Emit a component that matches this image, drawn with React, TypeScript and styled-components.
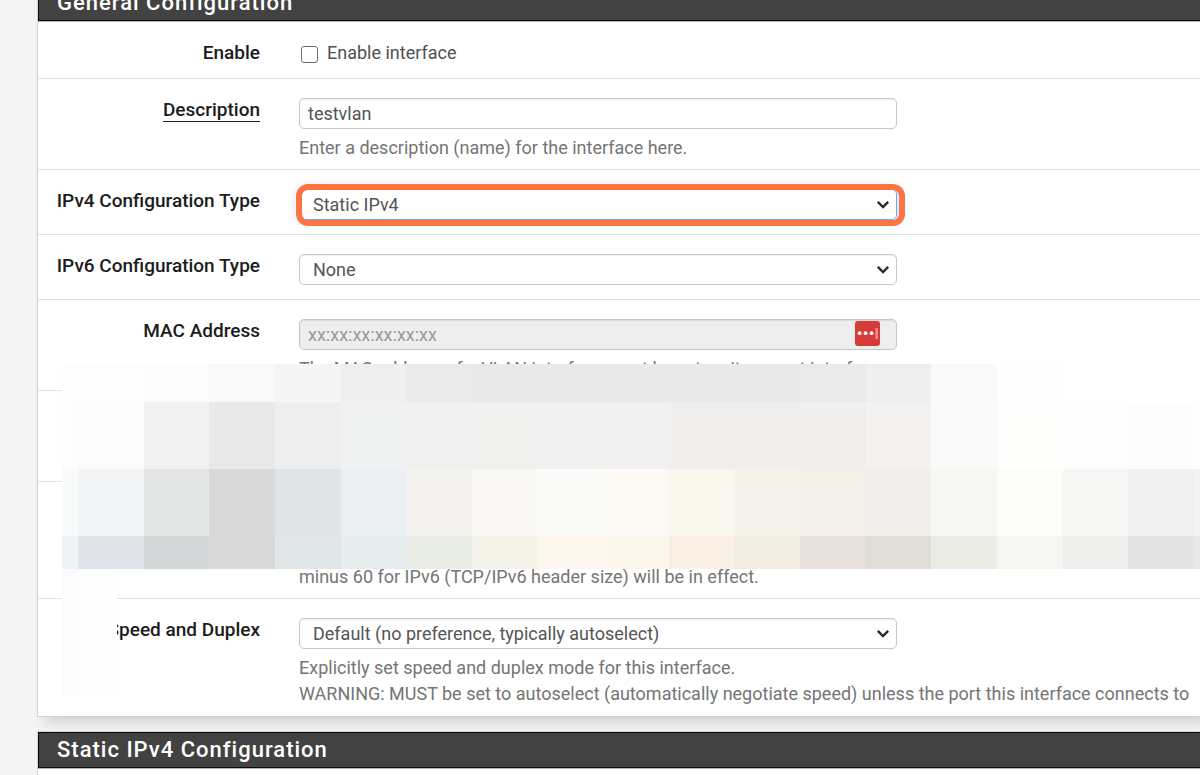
import React from "react";
import styled, { createGlobalStyle, css } from "styled-components";

const GlobalStyle = createGlobalStyle`
  *, *::before, *::after { box-sizing: border-box; }
  body {
    margin: 0;
    background: #f4f4f4;
    color: #212121;
    font-family: Roboto, "Liberation Sans", sans-serif;
    font-size: 18px;
    line-height: 26px;
    overflow: hidden;
  }
`;

const Page = styled.main`
  display: flex;
  flex-direction: column;
  gap: 14px;
  min-height: calc(100vh + 24px);
  margin-top: -16px;
  padding-left: 37px;
`;

const Panel = styled.section<{ $grow?: boolean }>`
  position: relative;
  flex: ${(p) => (p.$grow ? "1 0 auto" : "none")};
  overflow: hidden;
  background: #fff;
  border: 1px solid #d2d2d2;
  border-right: 0;
`;

const PanelFrame = styled.div`
  box-shadow: 8px 6px 12px rgba(0, 0, 0, 0.14);
`;

const Heading = styled.h2`
  height: 36px;
  margin: 0;
  padding: 0 18px;
  border: 1px solid #0c0c0c;
  border-right: 0;
  background: #424242;
  box-shadow: 0 1px 0 #b4b4b4;
  color: #fff;
  font-size: 22px;
  font-weight: 500;
  line-height: 34px;
  letter-spacing: 1px;
`;

const Rows = styled.div`
  padding-top: 1px;
`;

const Row = styled.div`
  display: grid;
  grid-template-columns: 222px minmax(0, 1fr);
  column-gap: 39px;
  padding: 19px 0 8px;
  border-bottom: 1px solid #e0e0e0;

  &:last-child { border-bottom: 0; }
`;

const labelText = css`
  justify-self: end;
  align-self: start;
  color: #1c1c1c;
  font-size: 19px;
  font-weight: 500;
  line-height: 24px;
  white-space: nowrap;
`;

const Label = styled.label`
  ${labelText}
`;

const Caption = styled.span`
  ${labelText}
`;

const Underlined = styled.span`
  display: block;
  height: 24px;
  border-bottom: 1px solid #212121;
`;

const CheckLabel = styled.label`
  display: flex;
  align-items: center;
  gap: 9px;
  margin-bottom: 5px;
  padding-left: 2px;
  color: #505050;
  line-height: 24px;
`;

const Checkbox = styled.input`
  appearance: none;
  width: 17px;
  height: 17px;
  margin: 2px 0 0;
  border: 1px solid #6e6e6e;
  border-radius: 3px;
  background: #fff;
`;

const Control = styled.div`
  position: relative;
  display: flex;
  max-width: 598px;
  height: 31px;
  margin-bottom: 6px;
`;

const controlBox = css`
  width: 100%;
  height: 31px;
  border: 1px solid #c8c8c8;
  border-radius: 5px;
  outline: 0;
  background: #fff;
  box-shadow: inset 0 1px 1px rgba(0, 0, 0, 0.08);
  color: #555;
  font: inherit;
`;

const TextBox = styled.input`
  ${controlBox}
  padding: 0 8px;

  &:disabled { background: #eee; border-color: #c6c6c6; }
  &::placeholder { color: #999; opacity: 1; }
`;

const Select = styled.select<{ $active?: boolean }>`
  ${controlBox}
  appearance: none;
  padding: 0 36px 0 13px;
  ${(p) =>
    p.$active &&
    css`
      border-color: #66afe9;
      box-shadow: 0 0 11px rgba(102, 175, 233, 0.6);
    `}
`;

const Arrow = styled.svg`
  position: absolute;
  top: 11px;
  right: 7px;
  pointer-events: none;
`;

const Ring = styled.span`
  position: absolute;
  inset: -5px -8px -6px -3px;
  border: 6px solid #ff7442;
  border-radius: 12px;
  pointer-events: none;
`;

const VaultButton = styled.button`
  position: absolute;
  top: 1px;
  right: 16px;
  display: flex;
  padding: 0;
  border: 0;
  background: none;
`;

const Help = styled.p`
  margin: 0;
  color: #757575;
  white-space: nowrap;
`;

const Spacer = styled.div<{ $height: number }>`
  height: ${(p) => p.$height}px;
`;

const Mosaic = styled.div`
  position: absolute;
  top: 379px;
  left: 24px;
  right: 0;
  display: grid;
  grid-template-columns: 16px repeat(17, 1fr) 6px;
  grid-template-rows: 38px 67px 67px 33px;
`;

const Tile = styled.span<{ $tone: string }>`
  background: ${(p) => p.$tone};
`;

const Patch = styled.div`
  position: absolute;
  top: 584px;
  left: 24px;
  width: 55px;
  height: 127px;
  border-left: 16px solid #fcfcfc;
  background: #fefefe;
`;

const tones = [
  "#fdfdfd #fdfdfd #fcfcfc #f9f9f9 #f5f5f5 #eeefee #eaeaea #e9e9e9 #e9e9e9 #e9e9e9 #e9e9e9 #e9e9e9 #eaeaea #efefef #f9f9f9 #fefefe #ffffff #ffffff #ffffff",
  "#fdfdfd #fbfbfb #f2f2f2 #e9e9e9 #edeeed #f0f2f1 #f0f0f1 #f0f0ef #f0f0f1 #f0f0f0 #f0efee #f0efee #f0efed #f3f2f0 #fafafa #fefefd #fdfdfd #fcfcfc #fdfdfd",
  "#f9fbfa #f3f5f7 #e4e6e5 #d9d9d9 #e0e4e7 #ebeff1 #f3f2ee #f9f8f5 #fafaf8 #fcf9f4 #f9f6ee #f6f3ec #f3efe9 #f0efeb #f7f8f3 #fcfdf8 #f6f6f5 #f0f0f0 #f4f4f4",
  "#eef3f6 #e1e5ea #d4d8d8 #d9d9d9 #e1e6e9 #e4ecee #eaece6 #f5f2e9 #fcf8f0 #fbf7ec #faf1e6 #f1ede2 #e9e1dc #e0ddd6 #eaece5 #f6f7f2 #eeeeec #e4e4e4 #e9e9e9",
].map((line) => line.split(" "));

function Chevron() {
  return (
    <Arrow width="14" height="10" viewBox="0 0 14 10" aria-hidden="true">
      <path d="M1.8 1.8 7 7l5.2-5.2" fill="none" stroke="#2b2b2b" strokeWidth="2.4" />
    </Arrow>
  );
}

function SelectRow(props: {
  id: string;
  label: string;
  value: string;
  active?: boolean;
  children?: React.ReactNode;
}) {
  return (
    <Row>
      <Label htmlFor={props.id}>{props.label}</Label>
      <div>
        <Control>
          <Select id={props.id} $active={props.active}>
            <option>{props.value}</option>
          </Select>
          <Chevron />
          {props.active && <Ring />}
        </Control>
        {props.children}
      </div>
    </Row>
  );
}

export default function App() {
  return (
    <>
      <GlobalStyle />
      <Page>
        <PanelFrame>
          <Panel>
            <Heading>General Configuration</Heading>
            <Rows>
              <Row>
                <Caption>Enable</Caption>
                <CheckLabel>
                  <Checkbox type="checkbox" />
                  Enable interface
                </CheckLabel>
              </Row>
              <Row>
                <Label htmlFor="descr">
                  <Underlined>Description</Underlined>
                </Label>
                <div>
                  <Control>
                    <TextBox id="descr" type="text" defaultValue="testvlan" />
                  </Control>
                  <Help>Enter a description (name) for the interface here.</Help>
                </div>
              </Row>
              <SelectRow id="type4" label="IPv4 Configuration Type" value="Static IPv4" active />
              <SelectRow id="type6" label="IPv6 Configuration Type" value="None" />
              <Row>
                <Label htmlFor="mac">MAC Address</Label>
                <div>
                  <Control>
                    <TextBox id="mac" type="text" placeholder="xx:xx:xx:xx:xx:xx" disabled />
                    <VaultButton type="button" aria-label="Fill from vault">
                      <svg width="27" height="27" viewBox="0 0 27 27" aria-hidden="true">
                        <rect x="1" y="1" width="25" height="25" rx="3" fill="#d63b38" />
                        <circle cx="5.6" cy="13.2" r="1.9" fill="#fff" />
                        <circle cx="11.6" cy="13.2" r="1.9" fill="#fff" />
                        <circle cx="17.6" cy="13.2" r="1.9" fill="#fff" />
                        <rect x="21.4" y="8" width="2.6" height="11" fill="#ef8f8c" />
                      </svg>
                    </VaultButton>
                  </Control>
                  <Help>The MAC address of a VLAN interface must be set on its parent interface</Help>
                </div>
              </Row>
              <Row>
                <Spacer $height={63} />
              </Row>
              <Row>
                <span />
                <div>
                  <Spacer $height={63} />
                  <Help>minus 60 for IPv6 (TCP/IPv6 header size) will be in effect.</Help>
                </div>
              </Row>
              <SelectRow
                id="media"
                label="Speed and Duplex"
                value="Default (no preference, typically autoselect)"
              >
                <Help>
                  Explicitly set speed and duplex mode for this interface.
                  <br />
                  WARNING: MUST be set to autoselect (automatically negotiate speed) unless the port this interface connects to
                </Help>
                <Spacer $height={1} />
              </SelectRow>
            </Rows>
            <Mosaic aria-hidden="true">
              {tones.flatMap((line, y) => line.map((tone, x) => <Tile key={`${y}-${x}`} $tone={tone} />))}
            </Mosaic>
            <Patch aria-hidden="true" />
          </Panel>
        </PanelFrame>
        <Panel $grow>
          <Heading>Static IPv4 Configuration</Heading>
        </Panel>
      </Page>
    </>
  );
}
